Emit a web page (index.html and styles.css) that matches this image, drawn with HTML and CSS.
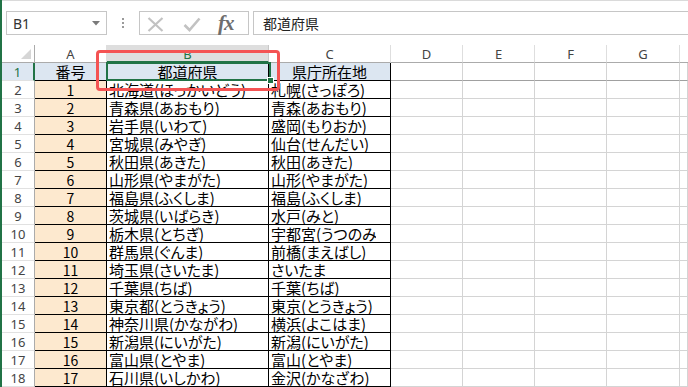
FILE: index.html
```html
<!DOCTYPE html>
<html lang="ja">
<head>
<meta charset="utf-8">
<link rel="stylesheet" href="styles.css">
</head>
<body>
<div class="app">
  <div class="fbar">
    <div class="namebox"><span class="nb-text">B1</span><svg class="nb-arrow" width="8" height="5" viewBox="0 0 8 5"><polygon points="0,0 8,0 4,4.5" fill="#7a7a7a"/></svg></div>
    <div class="dots"><i></i><i></i><i></i></div>
    <div class="fxbox">
      <svg class="ic" width="17" height="15" viewBox="0 0 17 15"><path d="M1.5 1 L15.5 14 M15.5 1 L1.5 14" stroke="#c2c2c2" stroke-width="2.2" fill="none"/></svg>
      <svg class="ic ic-check" width="18" height="15" viewBox="0 0 18 15"><path d="M1.5 8 L6.5 13 L16.5 1.5" stroke="#c2c2c2" stroke-width="2.6" fill="none"/></svg>
      <span class="fx">fx</span>
    </div>
    <div class="finput">都道府県</div>
  </div>
  <div class="sheet">
    <div class="c corner"><svg width="12" height="12" viewBox="0 0 12 12"><polygon points="11,1 11,11 1,11" fill="#d6d6d6"/></svg></div>
    <div class="c h">A</div><div class="c h hs">B</div><div class="c h">C</div><div class="c h">D</div><div class="c h">E</div><div class="c h">F</div><div class="c h">G</div><div class="c h hl"></div>

    <div class="c rh rs">1</div><div class="c t blue ctr">番号</div><div class="c t blue ctr">都道府県</div><div class="c t blue ctr">県庁所在地</div><div class="c g r1"></div><div class="c g r1"></div><div class="c g r1"></div><div class="c g r1"></div><div class="c g r1"></div>

    <div class="c rh">2</div><div class="c t peach num">1</div><div class="c t">北海道(ほっかいどう)</div><div class="c t">札幌(さっぽろ)</div><div class="c g"></div><div class="c g"></div><div class="c g"></div><div class="c g"></div><div class="c g"></div>
    <div class="c rh">3</div><div class="c t peach num">2</div><div class="c t">青森県(あおもり)</div><div class="c t">青森(あおもり)</div><div class="c g"></div><div class="c g"></div><div class="c g"></div><div class="c g"></div><div class="c g"></div>
    <div class="c rh">4</div><div class="c t peach num">3</div><div class="c t">岩手県(いわて)</div><div class="c t">盛岡(もりおか)</div><div class="c g"></div><div class="c g"></div><div class="c g"></div><div class="c g"></div><div class="c g"></div>
    <div class="c rh">5</div><div class="c t peach num">4</div><div class="c t">宮城県(みやぎ)</div><div class="c t">仙台(せんだい)</div><div class="c g"></div><div class="c g"></div><div class="c g"></div><div class="c g"></div><div class="c g"></div>
    <div class="c rh">6</div><div class="c t peach num">5</div><div class="c t">秋田県(あきた)</div><div class="c t">秋田(あきた)</div><div class="c g"></div><div class="c g"></div><div class="c g"></div><div class="c g"></div><div class="c g"></div>
    <div class="c rh">7</div><div class="c t peach num">6</div><div class="c t">山形県(やまがた)</div><div class="c t">山形(やまがた)</div><div class="c g"></div><div class="c g"></div><div class="c g"></div><div class="c g"></div><div class="c g"></div>
    <div class="c rh">8</div><div class="c t peach num">7</div><div class="c t">福島県(ふくしま)</div><div class="c t">福島(ふくしま)</div><div class="c g"></div><div class="c g"></div><div class="c g"></div><div class="c g"></div><div class="c g"></div>
    <div class="c rh">9</div><div class="c t peach num">8</div><div class="c t">茨城県(いばらき)</div><div class="c t">水戸(みと)</div><div class="c g"></div><div class="c g"></div><div class="c g"></div><div class="c g"></div><div class="c g"></div>
    <div class="c rh">10</div><div class="c t peach num">9</div><div class="c t">栃木県(とちぎ)</div><div class="c t"><span class="clip">宇都宮(うつのみや)</span></div><div class="c g"></div><div class="c g"></div><div class="c g"></div><div class="c g"></div><div class="c g"></div>
    <div class="c rh">11</div><div class="c t peach num">10</div><div class="c t">群馬県(ぐんま)</div><div class="c t">前橋(まえばし)</div><div class="c g"></div><div class="c g"></div><div class="c g"></div><div class="c g"></div><div class="c g"></div>
    <div class="c rh">12</div><div class="c t peach num">11</div><div class="c t">埼玉県(さいたま)</div><div class="c t">さいたま</div><div class="c g"></div><div class="c g"></div><div class="c g"></div><div class="c g"></div><div class="c g"></div>
    <div class="c rh">13</div><div class="c t peach num">12</div><div class="c t">千葉県(ちば)</div><div class="c t">千葉(ちば)</div><div class="c g"></div><div class="c g"></div><div class="c g"></div><div class="c g"></div><div class="c g"></div>
    <div class="c rh">14</div><div class="c t peach num">13</div><div class="c t">東京都(とうきょう)</div><div class="c t">東京(とうきょう)</div><div class="c g"></div><div class="c g"></div><div class="c g"></div><div class="c g"></div><div class="c g"></div>
    <div class="c rh">15</div><div class="c t peach num">14</div><div class="c t">神奈川県(かながわ)</div><div class="c t">横浜(よこはま)</div><div class="c g"></div><div class="c g"></div><div class="c g"></div><div class="c g"></div><div class="c g"></div>
    <div class="c rh">16</div><div class="c t peach num">15</div><div class="c t">新潟県(にいがた)</div><div class="c t">新潟(にいがた)</div><div class="c g"></div><div class="c g"></div><div class="c g"></div><div class="c g"></div><div class="c g"></div>
    <div class="c rh">17</div><div class="c t peach num">16</div><div class="c t">富山県(とやま)</div><div class="c t">富山(とやま)</div><div class="c g"></div><div class="c g"></div><div class="c g"></div><div class="c g"></div><div class="c g"></div>
    <div class="c rh">18</div><div class="c t peach num">17</div><div class="c t">石川県(いしかわ)</div><div class="c t">金沢(かなざわ)</div><div class="c g"></div><div class="c g"></div><div class="c g"></div><div class="c g"></div><div class="c g"></div>
  </div>
  <div class="sel"></div>
  <div class="handle"></div>
  <div class="callout"></div>
</div>
</body>
</html>
```

FILE: styles.css
```css
html, body {
  margin: 0;
  padding: 0;
  background: #fff;
}
.app {
  position: relative;
  width: 688px;
  height: 387px;
  overflow: hidden;
  box-sizing: border-box;
  border-left: 2px solid #217346;
  background: #fff;
  font-family: "Noto Sans CJK JP", "Noto Sans", sans-serif;
}
.fbar {
  height: 45px;
  box-sizing: border-box;
  border-top: 1px solid #dadada;
  padding-top: 10px;
  display: flex;
  align-items: flex-start;
}
.namebox {
  margin-left: 4px;
  width: 101px;
  height: 24px;
  box-sizing: border-box;
  border: 1px solid #c6c6c6;
  display: flex;
  align-items: center;
  justify-content: space-between;
  padding: 0 6px 0 6px;
}
.nb-text {
  font-family: "Noto Sans", sans-serif;
  font-size: 14px;
  color: #333;
}
.nb-arrow { margin-top: 1px; }
.dots {
  width: 32px;
  height: 24px;
  display: flex;
  flex-direction: column;
  align-items: center;
  justify-content: center;
  gap: 2px;
}
.dots i {
  display: block;
  width: 2px;
  height: 2px;
  background: #9a9a9a;
}
.fxbox {
  width: 110px;
  height: 24px;
  box-sizing: border-box;
  border: 1px solid #c6c6c6;
  display: flex;
  align-items: center;
  padding-left: 7px;
}
.ic { margin-right: 19px; margin-top: 2px; }
.ic-check { margin-right: 17px; }
.fx {
  font-family: "Liberation Serif", serif;
  font-style: italic;
  font-weight: bold;
  font-size: 21px;
  color: #6e6e6e;
  letter-spacing: -1px;
  line-height: 20px;
}
.finput {
  margin-left: 4px;
  flex: 1;
  height: 24px;
  box-sizing: border-box;
  border: 1px solid #c6c6c6;
  border-right: none;
  padding-left: 9px;
  font-size: 14px;
  line-height: 22px;
  color: #222;
}
.sheet {
  display: grid;
  grid-template-columns: 33px 72px 162px 122px 72px 72px 72px 73px 1fr;
  grid-auto-rows: 18px;
}
.c {
  box-sizing: border-box;
  border-right: 1px solid #d4d4d4;
  border-bottom: 1px solid #d4d4d4;
  overflow: hidden;
  white-space: nowrap;
  font-size: 15px;
  line-height: 17px;
  color: #000;
  font-feature-settings: "palt";
}
.clip {
  display: inline-block;
  width: 105px;
  overflow: hidden;
  vertical-align: top;
}
.corner {
  border-right: 1px solid #ababab;
  border-bottom: 1px solid #ababab;
  display: flex;
  align-items: flex-end;
  justify-content: flex-end;
  padding: 0 2px 2px 0;
}
.h {
  border-right: 1px solid #dedede;
  border-bottom: 1px solid #ababab;
  text-align: center;
  font-family: "Noto Sans", sans-serif;
  font-size: 13px;
  color: #444;
  line-height: 18px;
}
.hs {
  background: #dedede;
  color: #217346;
  border-bottom: 2px solid #217346;
  border-right-color: #c8c8c8;
}
.hl { border-right: none; }
.rh {
  border-right: 1px solid #ababab;
  border-bottom: 1px solid #e1e1e1;
  text-align: center;
  font-family: "Noto Sans", sans-serif;
  font-size: 13px;
  color: #444;
  line-height: 18px;
}
.rs {
  background: #dde7f2;
  color: #217346;
  border-right: 2px solid #217346;
}
.t {
  border-right: 1px solid #000;
  border-bottom: 1px solid #000;
  padding-left: 2px;
}
.ctr { text-align: center; padding-left: 0; }
.num { text-align: center; padding-left: 0; font-size: 14px; line-height: 18px; }
.blue { background: #dce6f1; }
.peach { background: #fde9cf; }
.r1 { border-bottom-color: #a0a0a0; }
.sel {
  position: absolute;
  left: 104px;
  top: 62px;
  width: 165px;
  height: 19px;
  box-sizing: border-box;
  border: 2px solid #217346;
}
.handle {
  position: absolute;
  left: 265px;
  top: 77px;
  width: 7px;
  height: 7px;
  box-sizing: border-box;
  background: #217346;
  border: 1px solid #fff;
}
.callout {
  position: absolute;
  left: 94px;
  top: 50px;
  width: 184px;
  height: 41px;
  box-sizing: border-box;
  border: 3px solid #f45353;
  border-radius: 4px;
}
```
